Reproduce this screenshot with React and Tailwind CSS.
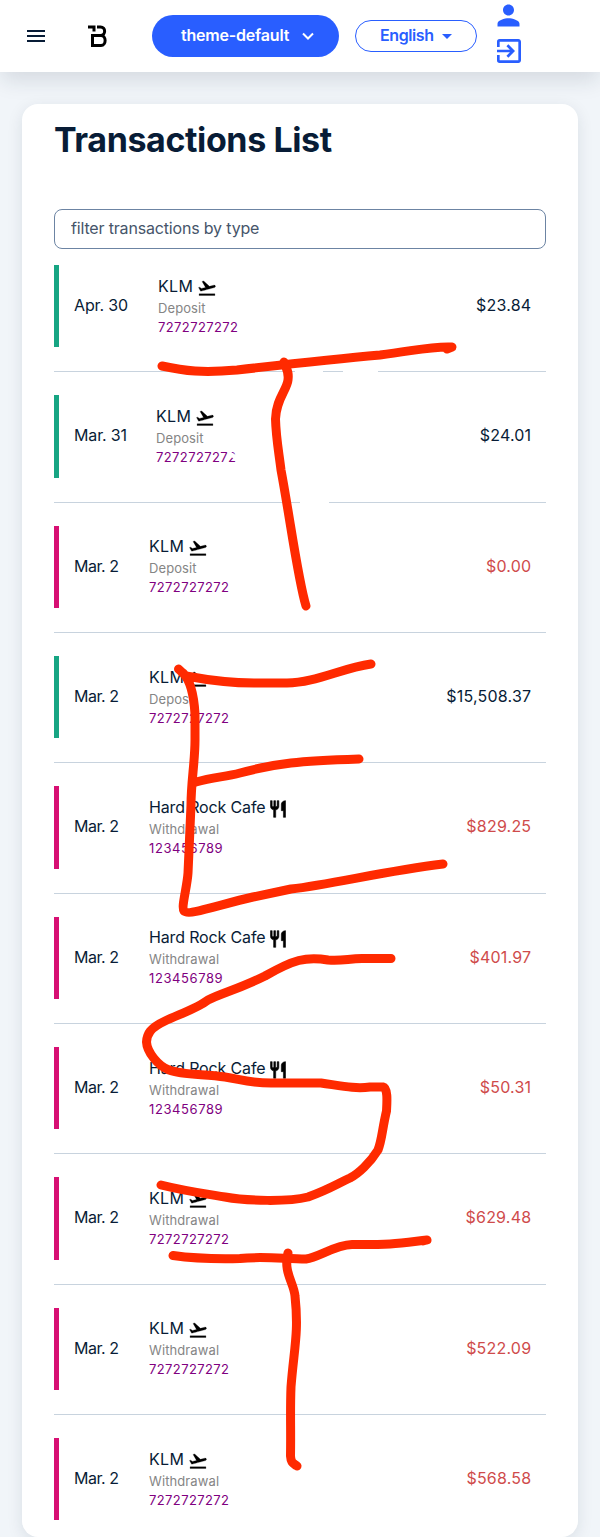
import { MdPerson, MdExitToApp, MdMenu } from "react-icons/md";

const TRANSACTIONS = [
  { date: "Apr. 30", name: "KLM", type: "Deposit", account: "7272727272", amount: "$23.84", edge: "green" },
  { date: "Mar. 31", name: "KLM", type: "Deposit", account: "7272727272", amount: "$24.01", edge: "green" },
  { date: "Mar. 2", name: "KLM", type: "Deposit", account: "7272727272", amount: "$0.00", edge: "pink" },
  { date: "Mar. 2", name: "KLM", type: "Deposit", account: "7272727272", amount: "$15,508.37", edge: "green" },
  { date: "Mar. 2", name: "Hard Rock Cafe", type: "Withdrawal", account: "123456789", amount: "$829.25", edge: "pink" },
  { date: "Mar. 2", name: "Hard Rock Cafe", type: "Withdrawal", account: "123456789", amount: "$401.97", edge: "pink" },
  { date: "Mar. 2", name: "Hard Rock Cafe", type: "Withdrawal", account: "123456789", amount: "$50.31", edge: "pink" },
  { date: "Mar. 2", name: "KLM", type: "Withdrawal", account: "7272727272", amount: "$629.48", edge: "pink" },
  { date: "Mar. 2", name: "KLM", type: "Withdrawal", account: "7272727272", amount: "$522.09", edge: "pink" },
  { date: "Mar. 2", name: "KLM", type: "Withdrawal", account: "7272727272", amount: "$568.58", edge: "pink" },
];

const COLUMN = {
  "Apr. 30": "w-[84px]",
  "Mar. 31": "w-[82px]",
  "Mar. 2": "w-[75px]",
};

function Logo() {
  return (
    <svg className="h-6 w-5" viewBox="0 0 20 24" fill="none" stroke="#000" strokeWidth="3">
      <path d="M0 3H6V7.500M9 3H12.500C18 3 18 11.500 12.500 11.500M4.500 11.500H13C18.500 11.500 18.500 21.500 13 21.500H4.500V10" />
    </svg>
  );
}

function PlaneIcon() {
  return (
    <svg className="mt-[4px] size-5" viewBox="0 0 24 24" fill="#000" stroke="#000" strokeWidth="0.3">
      <path d="M2.500 19h19v2h-19zm19.570-9.360c-.210-.800-1.040-1.280-1.840-1.060L14.920 10l-6.900-6.430-1.930.510 4.140 7.170-4.970 1.330-1.970-1.540-1.450.390 2.590 4.490s7.120-1.900 16.570-4.430c.810-.230 1.280-1.050 1.070-1.850z" />
    </svg>
  );
}

function CutleryIcon() {
  return (
    <svg className="mt-[4px] -ml-[1.500px] size-5" viewBox="0 0 24 24" fill="#000" stroke="#000" strokeWidth="0.7">
      <path d="M11 9H9V2H7v7H5V2H3v7c0 2.120 1.660 3.840 3.750 3.970V22h2.500v-9.030C11.340 12.840 13 11.120 13 9V2h-2v7zm5-3v8h2.500v8H21V2c-2.760 0-5 2.240-5 4z" />
    </svg>
  );
}

function Header() {
  return (
    <header className="relative flex h-[72px] shrink-0 items-center bg-white pl-6 shadow-[0_10px_20px_-2px_rgba(20,40,60,0.13)]">
      <MdMenu className="size-6 text-[#081c36]" />
      <div className="ml-10 w-16"><Logo /></div>
      <button className="flex h-[42px] w-[187px] items-center rounded-full bg-[#295eff] pb-0.5 pl-[29px] text-base font-semibold tracking-[-0.2px] text-white">
        <span className="w-[110px] text-left whitespace-nowrap">theme-default</span>
        <svg className="mt-0.5 ml-[11px] size-3" viewBox="0 0 12 12" fill="none" stroke="#fff" strokeWidth="2"><path d="M1 3.500 6 8.500 11 3.500" /></svg>
      </button>
      <button className="ml-4 flex h-8 w-[122px] items-center rounded-full border border-[#295eff] pb-0.5 pl-6 text-base font-semibold tracking-[-0.4px] text-[#295eff]">
        <span className="w-[54px] text-left">English</span>
        <span className="mt-0.5 ml-2 border-x-[5px] border-t-[5px] border-x-transparent border-t-[#295eff]" />
      </button>
      <div className="ml-4 flex h-full flex-col text-[#295eff]">
        <MdPerson className="-mt-[1px] -ml-px size-[33px]" />
        <MdExitToApp className="mt-[3px] size-8" />
      </div>
    </header>
  );
}

function Row({ item }) {
  const edge = item.edge === "green" ? "border-[#17a583]" : "border-[#d70f73]";
  const color = item.edge === "green" ? "text-[#081c36]" : "text-[#cf4b4b]";
  const isAirline = item.name === "KLM";
  return (
    <li className="border-b border-[#c8d3de] pb-6 last:border-b-0">
      <div className={`flex h-[82.330px] items-center border-l-[5px] pr-[15px] pb-0.5 pl-[15px] ${edge}`}>
        <div className={`shrink-0 ${item.date === "Mar. 2" ? "tracking-[-0.45px]" : "tracking-[-0.15px]"} ${COLUMN[item.date]}`}>{item.date}</div>
        <div className="flex-1">
          <div className="flex h-6 items-center gap-1">
            <span className={isAirline ? "tracking-[0.3px]" : "tracking-[-0.15px]"}>{item.name}</span>
            {isAirline ? <PlaneIcon /> : <CutleryIcon />}
          </div>
          <div className="text-[13px] leading-[20px] tracking-[0.1px] text-[#858585]">{item.type}</div>
          <div className={`text-[13px] leading-[19px] text-[#800080] ${isAirline ? "tracking-[0.4px]" : "tracking-[0.6px]"}`}>{item.account}</div>
        </div>
        <div className={`-mr-[0.3px] tracking-[0.2px] ${color}`}>{item.amount}</div>
      </div>
    </li>
  );
}

function Scribble() {
  return (
    <svg className="pointer-events-none absolute top-0 left-0" width="600" height="1537" viewBox="0 0 600 1537" fill="none" strokeLinecap="round" strokeLinejoin="round">
      <path stroke="#fff" strokeWidth="4" strokeLinecap="butt" d="M295 371.500H323M343 371.500H378M300 502.500H329M229 453L235 457" />
      <g stroke="#ff2a00" strokeWidth="9">
        <path d="M162 366C185 371 202 373 237 370C290 364 335 359 380 355C414 351 430 346 452 347L447 349" />
        <path d="M284 362C287 370 289 372 288 380C287 390 276 399 275.500 419C276 438 279 453 281 470C290 518 298 580 306 606" />
        <path d="M178.500 669L186 676C213 681 230 683 254 683H287C315 683 342 668 371 664M183 673C191 681 194 697 195 714V740C195 762 191 782 191 805C190 830 189 850 188 873C187 888 181 907 184 911C188 916 218 905 253 897L291 889C333 884 385 871 443 864" />
        <path d="M196 782C213 777 225 777 240 773C277 763 299 761 359 759" />
        <path d="M391 958.500H362C347 959 342 961 328 960C306 956 293 960 265 976C239 989 222 993 208 1000C198 1008 180 1014 165 1021C150 1028 147 1034 146.500 1042C147 1052 158 1066 169 1070C182 1075 203 1074 225 1077C240 1079 247 1083 271 1083H321C342 1086 355 1089 370 1087H383C388 1088 387 1102 386.500 1111C382 1130 382 1140 378 1150C370 1163 358 1174 350 1178C337 1184 328 1190 308 1197C288 1202 247 1201 225 1197C200 1193 185 1191 161 1185" />
        <path d="M173 1255.500C198 1259 220 1259 240 1258.500C263 1256 285 1259 306 1259C319 1257 335 1245 352 1244.500C392 1245 401 1243 427 1240L423 1241" />
        <path d="M288 1253C283 1272 294 1283 295 1296C299 1333 294 1348 291 1387C290 1412 291 1430 290.500 1456C291 1463 293 1463 297 1466" />
      </g>
    </svg>
  );
}

export default function App() {
  return (
    <div className="relative flex h-[1537px] w-[600px] flex-col overflow-hidden bg-[#f1f5f9] font-['Inter',sans-serif] text-[#081c36]">
      <Header />
      <main className="mx-[22px] mt-8 h-[1433px] rounded-2xl bg-white px-8 pt-4 shadow-[0_4px_16px_rgba(20,40,60,0.10)]">
        <h1 className="text-[34px] leading-10 font-bold tracking-[-0.4px] whitespace-nowrap">Transactions List</h1>
        <input className="mt-[49px] block h-10 w-full rounded-lg border border-[#6c84a3] px-4 pb-0.5 text-base tracking-[-0.17px] placeholder:text-[#46556a] placeholder:opacity-100" placeholder="filter transactions by type" />
        <ul className="mt-4 flex flex-col gap-[23px] text-base font-[370]">
          {TRANSACTIONS.map((item, i) => (
            <Row key={i} item={item} />
          ))}
        </ul>
      </main>
      <Scribble />
    </div>
  );
}
